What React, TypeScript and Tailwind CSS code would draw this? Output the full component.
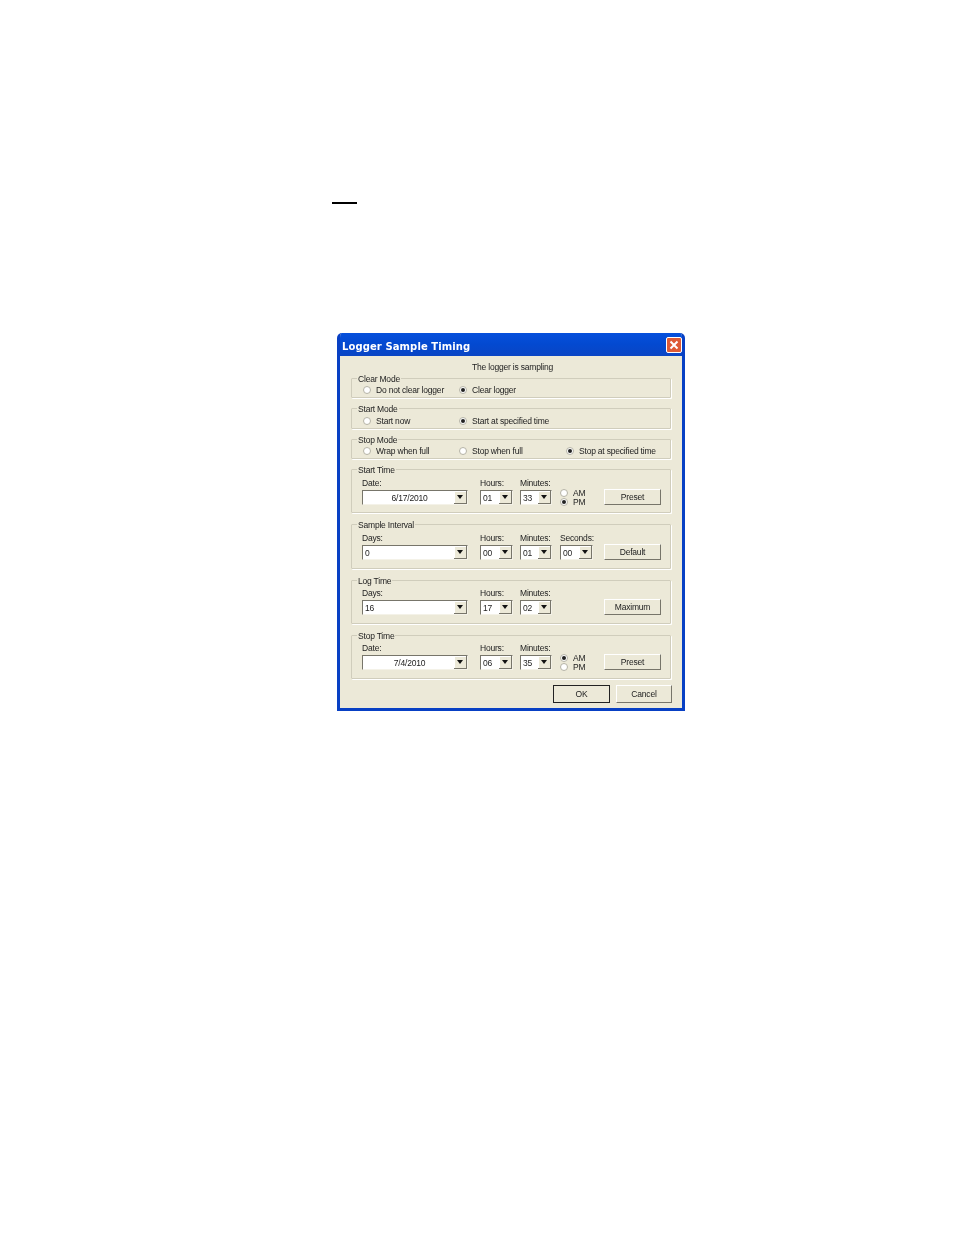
import type { ReactNode } from 'react'

function Radio({ checked = false }: { checked?: boolean }) {
  return (
    <span className="flex h-[8px] w-[8px] shrink-0 items-center justify-center rounded-full border border-[#b5b3a6] bg-white">
      {checked && <span className="h-[4px] w-[4px] rounded-full bg-[#222]" />}
    </span>
  )
}

function RadioItem({ label, checked, className }: { label: string; checked?: boolean; className: string }) {
  return (
    <div className={`flex items-center gap-[4px] ${className}`}>
      <Radio checked={checked} />
      <span className="whitespace-nowrap pl-px pt-px">{label}</span>
    </div>
  )
}

function Group({ title, className, children }: { title: string; className: string; children: ReactNode }) {
  return (
    <div className={`relative mx-[11px] rounded-[1px] border border-[#d0cdbc] shadow-[1px_1px_0_#ffffff] ${className}`}>
      <span className="absolute left-[5px] top-[-6px] bg-[#ece9d8] pl-px pr-px leading-[12px]">{title}</span>
      {children}
    </div>
  )
}

function Combo({ value, className, center }: { value: string; className: string; center?: boolean }) {
  return (
    <div className={`flex h-[15px] items-center border border-b-[#f4f2e8] border-l-[#77756a] border-r-[#f4f2e8] border-t-[#77756a] bg-white ${className}`}>
      <span className={`flex-1 pl-[2px] leading-[12px] ${center ? 'text-center' : ''}`}>{value}</span>
      <span className="flex h-[13px] w-[13px] items-center justify-center border-b border-r border-b-[#77756a] border-r-[#77756a] bg-[#ece9d8] shadow-[inset_1px_1px_0_#ffffff]">
        <svg width="6" height="4" viewBox="0 0 6 4">
          <path d="M0 0h6L3 4z" fill="#111" />
        </svg>
      </span>
    </div>
  )
}

function Button({ label, className }: { label: string; className: string }) {
  return (
    <div className={`flex items-center justify-center border border-b-[#77756a] border-l-white border-r-[#77756a] border-t-white bg-[#ece9d8] ${className}`}>
      {label}
    </div>
  )
}

function Field({ label, className, children }: { label: string; className: string; children: ReactNode }) {
  return (
    <div className={`flex flex-col ${className}`}>
      <span className="h-[14px] whitespace-nowrap leading-[14px]">{label}</span>
      {children}
    </div>
  )
}

function AmPm({ pm }: { pm?: boolean }) {
  return (
    <div className="ml-[8px] mt-[12px] flex w-[44px] flex-col leading-[9px]">
      <RadioItem label="AM" checked={!pm} className="h-[9px]" />
      <RadioItem label="PM" checked={pm} className="h-[9px]" />
    </div>
  )
}

export default function App() {
  return (
    <div className="h-[1235px] w-[954px] overflow-hidden bg-white pl-[337px] pt-[202px] font-['Liberation_Sans',sans-serif] text-[8.5px] tracking-[-0.2px] text-[#222]">
      <div className="ml-[-5px] h-[2px] w-[25px] bg-black" />

      <div className="mt-[129px] h-[378px] w-[348px] overflow-hidden rounded-t-[5px] border-x-[3px] border-b-[3px] border-x-[#0840c4] border-b-[#0840c4] bg-[#ece9d8] blur-[0.25px]">
        <div className="mx-[-3px] flex h-[23px] items-center justify-between bg-gradient-to-b from-[#0650dc] via-[#0349d0] to-[#0a45c4] pl-[5px] pr-[3px]">
          <span className="pt-[3px] font-['DejaVu_Sans',sans-serif] text-[10px] font-bold tracking-[0.1px] text-white">
            Logger Sample Timing
          </span>
          <span className="flex h-[16px] w-[16px] items-center justify-center rounded-[2px] border border-white bg-[#de5a35]">
            <svg width="10" height="10" viewBox="0 0 10 10">
              <path d="M1.5 1.5l7 7M8.5 1.5l-7 7" stroke="#fff" strokeWidth="2" />
            </svg>
          </span>
        </div>

        <div className="h-[22px] pl-[132px] pt-[5px] leading-[12px]">The logger is sampling</div>

        <Group title="Clear Mode" className="h-[20px]">
          <div className="flex h-full items-center pl-[11px] pt-[4px]">
            <RadioItem label="Do not clear logger" className="w-[96px]" />
            <RadioItem label="Clear logger" checked className="w-[107px]" />
          </div>
        </Group>

        <Group title="Start Mode" className="mt-[10px] h-[21px]">
          <div className="flex h-full items-center pl-[11px] pt-[4px]">
            <RadioItem label="Start now" className="w-[96px]" />
            <RadioItem label="Start at specified time" checked className="w-[107px]" />
          </div>
        </Group>

        <Group title="Stop Mode" className="mt-[10px] h-[20px]">
          <div className="flex h-full items-center pl-[11px] pt-[4px]">
            <RadioItem label="Wrap when full" className="w-[96px]" />
            <RadioItem label="Stop when full" className="w-[107px]" />
            <RadioItem label="Stop at specified time" checked className="w-[100px]" />
          </div>
        </Group>

        <Group title="Start Time" className="mt-[10px] h-[44px]">
          <div className="flex pl-[10px] pt-[6px]">
            <Field label="Date:" className="w-[118px]">
              <Combo value="6/17/2010" center className="w-[106px]" />
            </Field>
            <Field label="Hours:" className="w-[40px]">
              <Combo value="01" className="w-[33px]" />
            </Field>
            <Field label="Minutes:" className="w-[32px]">
              <Combo value="33" className="w-[32px]" />
            </Field>
            <AmPm pm />
            <Button label="Preset" className="mt-[13px] h-[16px] w-[57px]" />
          </div>
        </Group>

        <Group title="Sample Interval" className="mt-[11px] h-[45px]">
          <div className="flex pl-[10px] pt-[6px]">
            <Field label="Days:" className="w-[118px]">
              <Combo value="0" className="w-[106px]" />
            </Field>
            <Field label="Hours:" className="w-[40px]">
              <Combo value="00" className="w-[33px]" />
            </Field>
            <Field label="Minutes:" className="w-[40px]">
              <Combo value="01" className="w-[32px]" />
            </Field>
            <Field label="Seconds:" className="w-[44px]">
              <Combo value="00" className="w-[33px]" />
            </Field>
            <Button label="Default" className="mt-[13px] h-[16px] w-[57px]" />
          </div>
        </Group>

        <Group title="Log Time" className="mt-[11px] h-[44px]">
          <div className="flex pl-[10px] pt-[5px]">
            <Field label="Days:" className="w-[118px]">
              <Combo value="16" className="w-[106px]" />
            </Field>
            <Field label="Hours:" className="w-[40px]">
              <Combo value="17" className="w-[33px]" />
            </Field>
            <Field label="Minutes:" className="w-[84px]">
              <Combo value="02" className="w-[32px]" />
            </Field>
            <Button label="Maximum" className="mt-[13px] h-[16px] w-[57px]" />
          </div>
        </Group>

        <Group title="Stop Time" className="mt-[11px] h-[44px]">
          <div className="flex pl-[10px] pt-[5px]">
            <Field label="Date:" className="w-[118px]">
              <Combo value="7/4/2010" center className="w-[106px]" />
            </Field>
            <Field label="Hours:" className="w-[40px]">
              <Combo value="06" className="w-[33px]" />
            </Field>
            <Field label="Minutes:" className="w-[32px]">
              <Combo value="35" className="w-[32px]" />
            </Field>
            <AmPm />
            <Button label="Preset" className="mt-[13px] h-[16px] w-[57px]" />
          </div>
        </Group>

        <div className="mt-[6px] flex justify-end gap-[6px] pr-[10px]">
          <Button label="OK" className="h-[18px] w-[57px] outline outline-1 -outline-offset-1 outline-[#222]" />
          <Button label="Cancel" className="h-[18px] w-[56px]" />
        </div>
      </div>
    </div>
  )
}
